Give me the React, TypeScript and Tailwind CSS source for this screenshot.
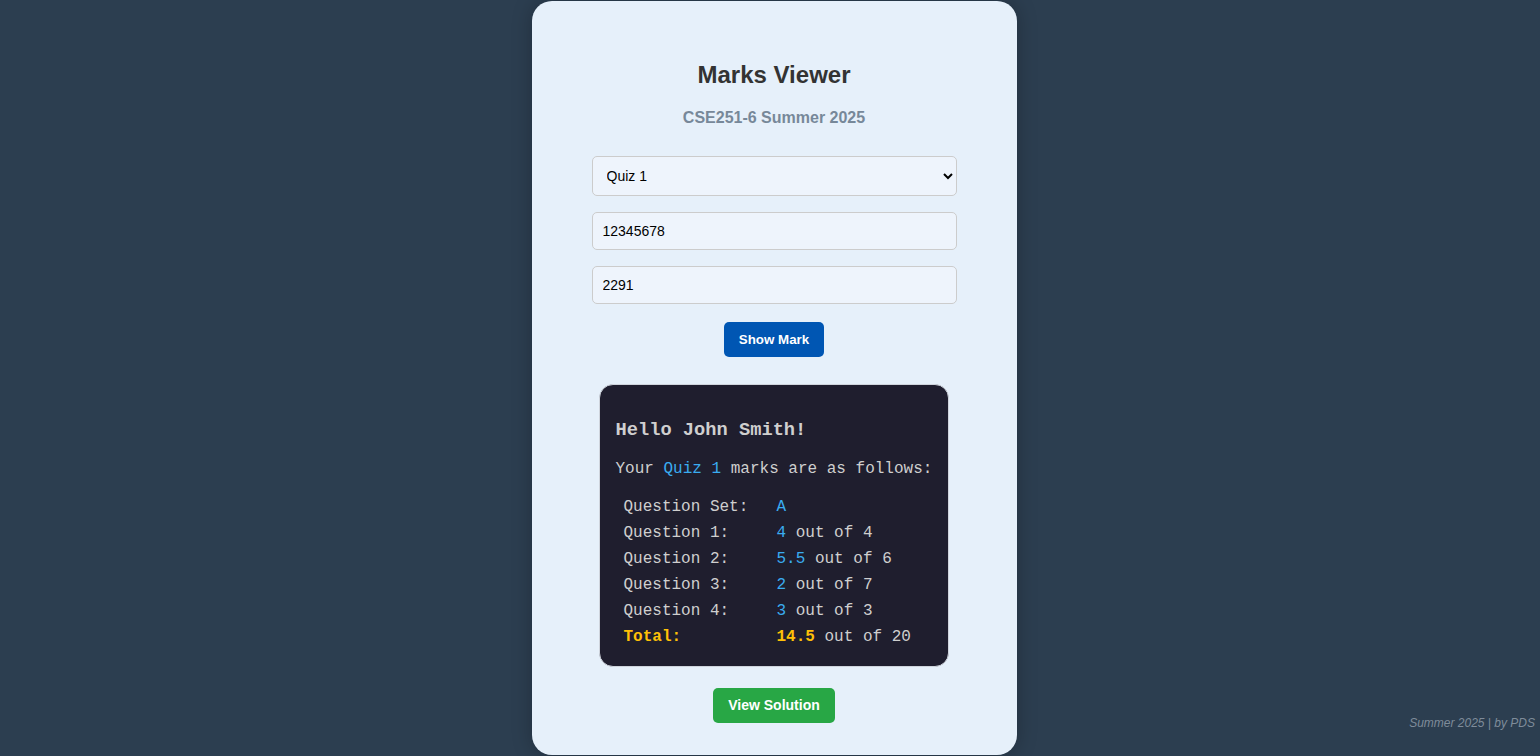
import { useState } from 'react';

const rows = [
  { label: 'Question 1:', got: '4', total: '4' },
  { label: 'Question 2:', got: '5.5', total: '6' },
  { label: 'Question 3:', got: '2', total: '7' },
  { label: 'Question 4:', got: '3', total: '3' },
];

export default function App() {
  const [exam, setExam] = useState('Quiz 1');
  const [studentId, setStudentId] = useState('12345678');
  const [pin, setPin] = useState('2291');

  return (
    <div className="relative min-h-[756px] bg-[#2c3e50] font-['Liberation_Sans',Arial,sans-serif]">
      <div className="flex justify-center pl-[8px] pt-px">
        {/* Card */}
        <div className="w-[485px] h-[754px] bg-[#e6f0fa] rounded-[20px] shadow-[0_0_20px_rgba(0,0,0,0.25)] px-[60px] pt-[60px] flex flex-col">
          <h2 className="text-center text-[24px] leading-[28px] font-bold text-[#333]">Marks Viewer</h2>
          <h4 className="mt-[20px] text-center text-[16px] leading-[18px] font-bold text-[#778899]">
            CSE251-6 Summer 2025
          </h4>

          {/* Form */}
          <select
            value={exam}
            onChange={(e) => setExam(e.target.value)}
            className="mt-[29px] h-[40px] w-full px-[10px] text-[14px] text-black bg-[#eef4fc] border border-[#cccccc] rounded-[5px]"
          >
            <option>Quiz 1</option>
            <option>Quiz 2</option>
            <option>Mid</option>
          </select>
          <input
            value={studentId}
            onChange={(e) => setStudentId(e.target.value)}
            className="mt-[16px] h-[38px] w-full px-[10px] text-[14px] text-black bg-[#eef4fc] border border-[#cccccc] rounded-[5px] outline-none"
          />
          <input
            value={pin}
            onChange={(e) => setPin(e.target.value)}
            className="mt-[16px] h-[38px] w-full px-[10px] text-[14px] text-black bg-[#eef4fc] border border-[#cccccc] rounded-[5px] outline-none"
          />

          <div className="mt-[18px] flex justify-center">
            <button className="h-[35px] w-[100px] bg-[#0056b3] text-white text-[13.33px] font-bold rounded-[5px]">
              Show Mark
            </button>
          </div>

          {/* Result */}
          <div className="mt-[27px] ml-[7px] w-[350px] h-[283px] bg-[#1f1e2e] border border-[#cfd4dc] rounded-[14px] pl-[16px] pr-[8px] pt-[34px] font-['Liberation_Mono','Courier_New',monospace] text-[#cfcfcf]">
            <h3 className="text-[18.72px] leading-[22px] font-bold whitespace-nowrap">Hello John Smith!</h3>
            <p className="mt-[19px] text-[16px] leading-[18px] whitespace-nowrap">
              Your <span className="text-[#3aacf0]">Quiz 1</span> marks are as follows:
            </p>
            <div className="mt-[16px] grid grid-cols-[153px_auto] pl-[8px] text-[16px] leading-[26px] whitespace-nowrap">
              <div>Question Set:</div>
              <div className="text-[#3aacf0]">A</div>
              {rows.map((r) => (
                <div key={r.label} className="contents">
                  <div>{r.label}</div>
                  <div>
                    <span className="text-[#3aacf0]">{r.got}</span> out of {r.total}
                  </div>
                </div>
              ))}
              <div className="font-bold text-[#ffc107]">Total:</div>
              <div>
                <span className="font-bold text-[#ffc107]">14.5</span> out of 20
              </div>
            </div>
          </div>

          <div className="mt-[21px] flex justify-center">
            <button className="h-[35px] px-[15px] bg-[#28a745] text-white text-[14px] font-bold rounded-[5px]">
              View Solution
            </button>
          </div>
        </div>
      </div>

      {/* Footer */}
      <div className="absolute right-[5px] bottom-[24px] text-[12px] italic text-[#7f8c9a]">
        Summer 2025 | by PDS
      </div>
    </div>
  );
}
